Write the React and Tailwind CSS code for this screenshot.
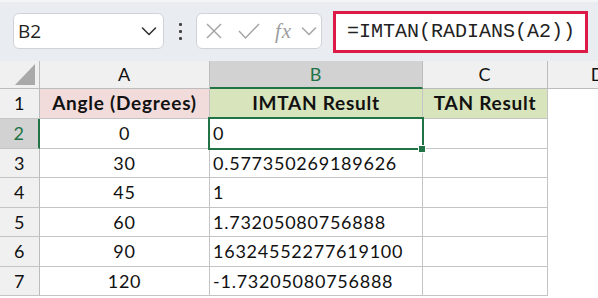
import React from "react";

const rows = [
  { n: "1", a: "Angle (Degrees)", b: "IMTAN Result", c: "TAN Result", h: 30, head: true },
  { n: "2", a: "0", b: "0", c: "", h: 30, sel: true },
  { n: "3", a: "30", b: "0.577350269189626", c: "", h: 29 },
  { n: "4", a: "45", b: "1", c: "", h: 30 },
  { n: "5", a: "60", b: "1.73205080756888", c: "", h: 29 },
  { n: "6", a: "90", b: "16324552277619100", c: "", h: 30 },
  { n: "7", a: "120", b: "-1.73205080756888", c: "", h: 29 },
];

function Chevron({ className, color }) {
  return (
    <svg className={className} width="16" height="10" viewBox="0 0 16 10" fill="none">
      <polyline points="1.5,2 8,8.5 14.5,2" stroke={color} strokeWidth="1.6" strokeLinecap="round" strokeLinejoin="round" />
    </svg>
  );
}

function Toolbar() {
  return (
    <div className="h-[61px] bg-[#e9ecf0] flex items-start border-t-[2px] border-[#f3f5f7]">
      <div className="ml-[13px] mt-[11px] w-[151px] h-[36px] bg-white border border-[#cfd3d8] rounded-[6px] flex items-center pl-[4px] pr-[6px]">
        <span className="text-[19px] text-[#1f1f1f] font-['Open_Sans',sans-serif] leading-none">B2</span>
        <Chevron className="ml-auto" color="#333333" />
      </div>
      <div className="w-[32px] h-[36px] mt-[11px] flex flex-col items-center justify-center gap-[4px]">
        <div className="w-[3px] h-[3px] bg-[#444] rounded-[1px]" />
        <div className="w-[3px] h-[3px] bg-[#444] rounded-[1px]" />
        <div className="w-[3px] h-[3px] bg-[#444] rounded-[1px]" />
      </div>
      <div className="w-[126px] h-[36px] mt-[11px] bg-white border border-[#cfd3d8] rounded-[6px] flex items-center pl-[8px]">
        <svg width="18" height="18" viewBox="0 0 18 18" fill="none">
          <line x1="2" y1="2" x2="16" y2="16" stroke="#a3a3a3" strokeWidth="1.4" />
          <line x1="16" y1="2" x2="2" y2="16" stroke="#a3a3a3" strokeWidth="1.4" />
        </svg>
        <svg className="ml-[15px]" width="22" height="18" viewBox="0 0 22 18" fill="none">
          <polyline points="1,9 7.5,16 21,2" stroke="#a3a3a3" strokeWidth="1.4" fill="none" />
        </svg>
        <span className="ml-[15px] text-[21px] italic text-[#9e9e9e] font-['Liberation_Serif',serif] leading-none tracking-[1px]">fx</span>
        <Chevron className="ml-[9px]" color="#a8a8a8" />
      </div>
      <div className="ml-[11px] mt-[9px] w-[255px] h-[42px] bg-white border-[3px] border-[#dc1a48] flex items-center pl-[11px]">
        <span className="text-[20px] text-[#222] font-['Liberation_Mono',monospace] leading-none">=IMTAN(RADIANS(A2))</span>
      </div>
    </div>
  );
}

const cellFont = "font-['Lato',sans-serif] text-[18px] tracking-[0.75px] text-[#111]";
const boldFont = "font-bold text-[19px] tracking-[0.3px]";

function HeaderRow() {
  return (
    <div className="flex h-[28px] bg-[#f0f0f0]">
      <div className="w-[40px] shrink-0 border-r border-b border-[#bcbcbc] relative">
        <svg className="absolute left-[15px] top-[3px]" width="20" height="21" viewBox="0 0 20 21">
          <polygon points="20,0 20,21 0,21" fill="#a9a9a9" />
        </svg>
      </div>
      <div className={`w-[170px] shrink-0 border-r border-b border-[#bcbcbc] flex items-center justify-center ${cellFont}`}>A</div>
      <div className={`w-[213px] shrink-0 border-r border-[#bcbcbc] border-b-[2px] border-b-[#217346] bg-[#d2d2d2] flex items-center justify-center ${cellFont}`}>
        <span className="text-[#217346]">B</span>
      </div>
      <div className={`w-[125px] shrink-0 border-r border-b border-[#bcbcbc] flex items-center justify-center ${cellFont}`}>C</div>
      <div className={`w-[100px] shrink-0 border-b border-[#bcbcbc] flex items-center justify-center ${cellFont}`}>D</div>
    </div>
  );
}

function Row({ r }) {
  const h = r.h === 30 ? "h-[30px]" : "h-[29px]";
  return (
    <div className={`flex ${h}`}>
      <div
        className={`w-[40px] shrink-0 border-b border-[#c4c4c4] flex items-center justify-center ${cellFont} ${
          r.sel ? "bg-[#d2d2d2] border-r-[2px] border-r-[#217346]" : "bg-[#f0f0f0] border-r border-r-[#bcbcbc]"
        }`}
      >
        <span className={r.sel ? "text-[#217346]" : ""}>{r.n}</span>
      </div>
      <div
        className={`w-[170px] shrink-0 border-r border-b border-[#c4c4c4] flex items-center justify-center ${cellFont} ${
          r.head ? `bg-[#f2dcdb] ${boldFont}` : "bg-white"
        }`}
      >
        {r.a}
      </div>
      <div
        className={`w-[213px] shrink-0 border-r border-b border-[#c4c4c4] flex items-center ${cellFont} ${
          r.head ? `bg-[#d8e4bc] justify-center ${boldFont}` : "bg-white pl-[3px]"
        }`}
      >
        {r.b}
      </div>
      <div
        className={`w-[125px] shrink-0 border-r border-b border-[#c4c4c4] flex items-center justify-center ${cellFont} ${
          r.head ? `bg-[#d8e4bc] ${boldFont}` : "bg-white"
        }`}
      >
        {r.c}
      </div>
      <div className="w-[100px] shrink-0 bg-white" />
    </div>
  );
}

export default function App() {
  return (
    <div className="w-[598px] h-[298px] overflow-hidden bg-white relative">
      <Toolbar />
      <div className="w-[700px]">
        <HeaderRow />
        {rows.map((r) => (
          <Row key={r.n} r={r} />
        ))}
      </div>
      <div className="absolute left-[208px] top-[117px] w-[216px] h-[33px] border-[2px] border-[#217346] pointer-events-none" />
      <div className="absolute left-[418px] top-[145px] w-[8px] h-[8px] bg-[#217346] border border-white pointer-events-none" />
    </div>
  );
}
